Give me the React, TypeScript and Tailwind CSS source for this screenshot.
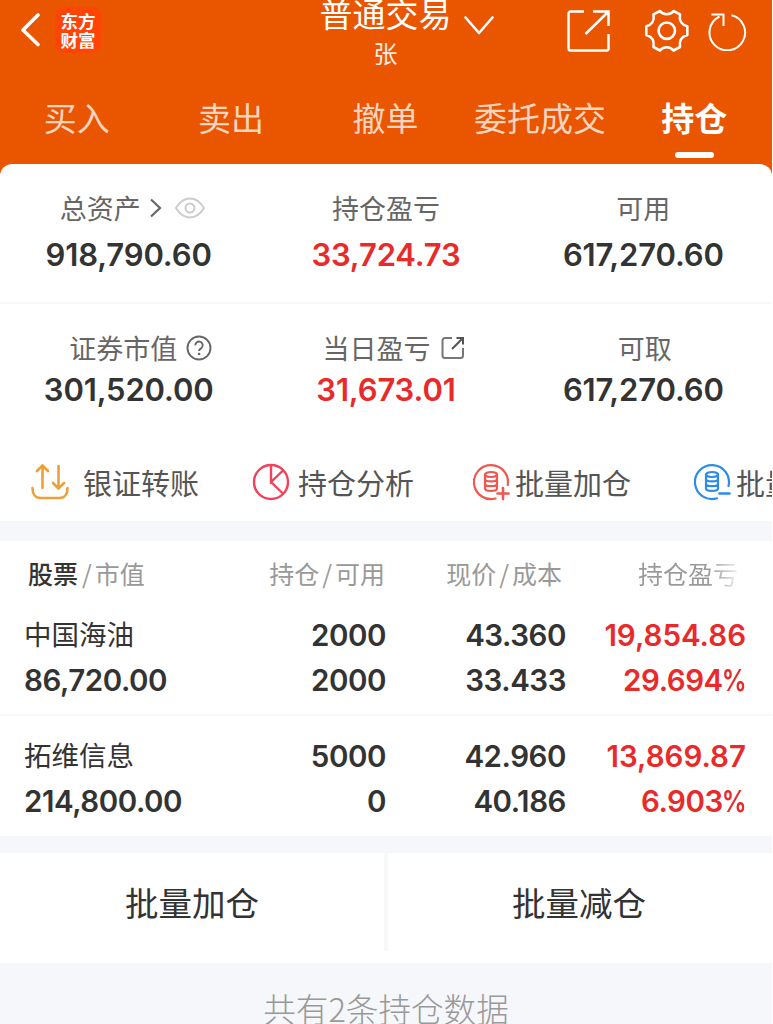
import type { ReactNode } from 'react';
import clsx from 'clsx';

const tabs = ['买入', '卖出', '撤单', '委托成交', '持仓'];

const holdings = [
  {
    name: '中国海油',
    value: '86,720.00',
    amount: '2000',
    available: '2000',
    price: '43.360',
    cost: '33.433',
    profit: '19,854.86',
    rate: '29.694',
  },
  {
    name: '拓维信息',
    value: '214,800.00',
    amount: '5000',
    available: '0',
    price: '42.960',
    cost: '40.186',
    profit: '13,869.87',
    rate: '6.903',
  },
];

const BackIcon = () => (
  <svg width="20" height="34" viewBox="0 0 20 34" fill="none" stroke="#fff" strokeWidth="3.6" strokeLinecap="round" strokeLinejoin="round">
    <path d="M18 2 3 17l15 14.500" />
  </svg>
);

const ChevronIcon = () => (
  <svg width="30" height="19" viewBox="0 0 30 19" fill="none" stroke="#fff" strokeWidth="2.6" strokeLinecap="round" strokeLinejoin="round">
    <path d="M1.500 1.500 15 17 28.500 1.500" />
  </svg>
);

const ShareIcon = () => (
  <svg width="44" height="44" viewBox="0 0 44 44" fill="none" stroke="#fff" strokeWidth="2.500">
    <path d="M18 2.500H4.500a2 2 0 0 0-2 2v35a2 2 0 0 0 2 2h36a2 2 0 0 0 2-2V25" />
    <path d="M27 2.500h15.500V17M42 3 19.500 25" />
  </svg>
);

const GearIcon = () => (
  <svg width="44" height="44" viewBox="0 0 44 44" fill="none" stroke="#fff" strokeWidth="2.600" strokeLinejoin="round">
    <path d="M15 2 C18 6.300 25.500 6.300 28.500 2 L35 5.300 C34 12 36 15.500 42.300 17.300 V26 C36 28 34 31.500 35 38 L28.500 41.500 C25.500 37.200 18 37.200 15 41.500 L8.500 38 C9.500 31.500 7.500 28 1.300 26 V17.300 C7.500 15.500 9.500 12 8.500 5.300 Z" />
    <circle cx="21.800" cy="21.700" r="8.200" />
  </svg>
);

const RefreshIcon = () => (
  <svg width="40" height="40" viewBox="0 0 40 40" fill="none" stroke="#fff" strokeWidth="2">
    <path d="M23.500 4.200A17.800 17.800 0 1 1 11.500 5.500" />
    <path d="M3.500 3.500H15.500V15" />
  </svg>
);

const EyeIcon = () => (
  <svg width="30" height="22" viewBox="0 0 30 22" fill="none" stroke="#ccc" strokeWidth="2">
    <path d="M1 11C5 4.500 9.500 1.500 15 1.500S25 4.500 29 11C25 17.500 20.500 20.500 15 20.500S5 17.500 1 11Z" />
    <circle cx="15" cy="11" r="4.500" />
  </svg>
);

const HelpIcon = () => (
  <svg width="26" height="26" viewBox="0 0 26 26" fill="none" stroke="#666" strokeWidth="1.900">
    <circle cx="13" cy="13" r="11.500" />
    <path d="M9.300 10.400a3.700 3.700 0 1 1 5.700 3c-1.400.9-2 1.300-2 2.600" />
    <path d="M13 17.800v2.300" strokeWidth="2.300" />
  </svg>
);

const OpenIcon = () => (
  <svg width="24" height="24" viewBox="0 0 24 24" fill="none" stroke="#777" strokeWidth="2">
    <path d="M11 2H4a2.500 2.500 0 0 0-2.500 2.500v15A2.500 2.500 0 0 0 4 22h15.500a2.500 2.500 0 0 0 2.500-2.500V12" />
    <path d="M15.500 2H22v6.500M22 2 11 13" stroke="#555" />
  </svg>
);

const TransferIcon = () => (
  <svg width="38" height="38" viewBox="0 0 38 38" fill="none" stroke="#eba038" strokeWidth="2.600" strokeLinecap="round" strokeLinejoin="round">
    <path d="M11.500 25V3M6 8l5.500-5.500L17 8M27.500 3v22M22 20l5.500 5.500L33 20" />
    <path d="M1.500 25c0 6 3 10 8 10h19c5 0 8-4 8-10" />
  </svg>
);

const PieIcon = () => (
  <svg width="38" height="38" viewBox="0 0 38 38" fill="none" stroke="#f2415a" strokeWidth="2.400">
    <circle cx="19" cy="19" r="17" />
    <path d="M19 2v17l12-11.500M19 19l12.500 12" />
  </svg>
);

const BatchIcon = ({ minus }: { minus?: boolean }) => (
  <svg
    width="38"
    height="38"
    viewBox="0 0 38 38"
    fill="none"
    stroke={minus ? '#2b8cea' : '#f0584f'}
    strokeWidth="2.200"
    strokeLinecap="round"
  >
    <path d={minus ? 'M34.500 23A17 17 0 1 0 23 35.300' : 'M34.700 22A17 17 0 1 0 22.500 35.500'} />
    <ellipse cx="18" cy="11.500" rx="6" ry="2.500" />
    <path d="M12 11.500v14c0 3.200 12 3.200 12 0V11.500M12 16c0 3.200 12 3.200 12 0M12 20.800c0 3.200 12 3.200 12 0" />
    {minus ? <path d="M25.500 30.500h10" strokeWidth="2.600" /> : <path d="M24.500 30.500h11M30 25v11" strokeWidth="2.600" />}
  </svg>
);

type StatProps = {
  label: string;
  value: string;
  red?: boolean;
  tight?: boolean;
  labelClass?: string;
  children?: ReactNode;
};

const Stat = ({ label, value, red, tight, labelClass, children }: StatProps) => (
  <div className="flex flex-col items-center">
    <div className={clsx('flex h-9 items-center text-[27px] leading-9 text-[#666]', labelClass)}>
      <span>{label}</span>
      {children}
    </div>
    <p
      className={clsx(
        'font-[Inter] text-[31px] leading-9 font-semibold tracking-[-0.150px] whitespace-nowrap',
        tight ? 'mt-1.5' : 'mt-[11px]',
        red ? 'text-[#e92a2a]' : 'text-[#333]'
      )}
    >
      {value}
    </p>
  </div>
);

const Action = ({ icon, label }: { icon: ReactNode; label: string }) => (
  <div className="flex shrink-0 items-center text-[29px] leading-10 text-[#555]">
    {icon}
    <span className="whitespace-nowrap">{label}</span>
  </div>
);

export default function App() {
  return (
    <div className="h-[1024px] w-[773px] overflow-hidden bg-white font-['Noto_Sans_CJK_SC',sans-serif]">
      <div className="w-[772px]">
        <div className="bg-[#ea5500]">
          <header className="flex h-[84px] items-start text-white">
            <div className="flex w-[320px] items-center pt-[7px] pl-[20px]">
              <BackIcon />
              <div className="ml-[15px] flex h-[46px] w-[46px] flex-col items-center justify-center rounded-[9px] bg-[#ff4405] text-[17.500px] leading-[19.500px] font-bold">
                <span>东方</span>
                <span>财富</span>
              </div>
            </div>
            <div className="flex w-[131px] flex-col items-center">
              <h1 className="-mt-[7px] text-[33px] leading-[40px] font-normal whitespace-nowrap">普通交易</h1>
              <p className="mt-0.5 text-[24px] leading-9 text-white/90">张</p>
            </div>
            <div className="pt-4 pl-[13px]">
              <ChevronIcon />
            </div>
            <div className="flex items-center pt-[9px] pl-[72px]">
              <ShareIcon />
              <div className="ml-[35px]">
                <GearIcon />
              </div>
              <div className="ml-[19px]">
                <RefreshIcon />
              </div>
            </div>
          </header>
          <nav className="grid h-20 grid-cols-5">
            {tabs.map((tab) => {
              const active = tab === '持仓';
              return (
                <div key={tab} className="flex flex-col items-center pt-2">
                  <span
                    className={clsx(
                      '-ml-px text-[33px] leading-[50px] whitespace-nowrap',
                      active ? 'font-bold text-white' : 'font-normal text-white/75'
                    )}
                  >
                    {tab}
                  </span>
                  {active && <i className="mt-2.5 h-1.5 w-[39px] rounded-full bg-white" />}
                </div>
              );
            })}
          </nav>
          <div className="h-3 rounded-t-[14px] bg-white" />
        </div>

        <section className="h-[345px]">
          <div className="grid h-[128px] grid-cols-3 border-b-2 border-[#f8f8f8] pt-[14px]">
            <Stat label="总资产" value="918,790.60" labelClass="pl-[7px]">
              <svg className="ml-2" width="14" height="20" viewBox="0 0 14 20" fill="none" stroke="#666" strokeWidth="2.200">
                <path d="m2 1.500 9 8.500-9 8.500" />
              </svg>
              <span className="ml-3">
                <EyeIcon />
              </span>
            </Stat>
            <Stat label="持仓盈亏" value="33,724.73" red />
            <Stat label="可用" value="617,270.60" />
          </div>
          <div className="grid h-[142px] grid-cols-3 pt-[26px]">
            <Stat label="证券市值" value="301,520.00" tight labelClass="pl-[24px]">
              <span className="ml-[9px]">
                <HelpIcon />
              </span>
            </Stat>
            <Stat label="当日盈亏" value="31,673.01" red tight labelClass="pl-[16px]">
              <span className="ml-[11px]">
                <OpenIcon />
              </span>
            </Stat>
            <Stat label="可取" value="617,270.60" tight labelClass="pl-[3px]" />
          </div>
          <div className="flex overflow-hidden pt-4 pl-[31px]">
            <Action icon={<span className="mr-[14px]"><TransferIcon /></span>} label="银证转账" />
            <Action icon={<span className="mr-2 ml-[53px]"><PieIcon /></span>} label="持仓分析" />
            <Action icon={<span className="mr-1 ml-[59px]"><BatchIcon /></span>} label="批量加仓" />
            <Action icon={<span className="mr-1 ml-[63px]"><BatchIcon minus /></span>} label="批量减仓" />
          </div>
        </section>

        <div className="h-5 bg-[#f5f7fa]" />

        <section>
          <div className="grid h-[72px] grid-cols-[220px_137px_181px_1fr] pt-[14px] pr-[26px] pl-7 text-right text-[25px] leading-9 whitespace-nowrap text-[#999]">
            <p className="text-left">
              <span className="font-medium text-[#333]">股票</span>
              <span className="mr-[3px] ml-1">/</span>市值
            </p>
            <p>
              持仓<span className="mx-[3px]">/</span>可用
            </p>
            <p className="pr-1">
              现价<span className="mx-[3px]">/</span>成本
            </p>
            <p className="pr-2">
              <span className="bg-linear-to-r from-[#999] from-70% to-[#eee] bg-clip-text text-transparent">持仓盈亏</span>
            </p>
          </div>
          {holdings.map((item, i) => (
            <div
              key={item.name}
              className={clsx(
                'grid grid-cols-[180px_182px_180px_1fr] pr-[26px] pl-6 text-right font-[Inter] text-[29.500px] leading-[45px] font-semibold tracking-[-0.450px] whitespace-nowrap text-[#333]',
                i === 0 ? 'h-[103px] border-b-2 border-[#f7f7f7]' : 'h-[120px] pt-[18px]'
              )}
            >
              <div className="text-left">
                <p className="-mt-0.5 mb-0.5 font-['Noto_Sans_CJK_SC',sans-serif] text-[27.500px] font-normal tracking-normal">
                  {item.name}
                </p>
                <p>{item.value}</p>
              </div>
              <div>
                <p>{item.amount}</p>
                <p>{item.available}</p>
              </div>
              <div>
                <p>{item.price}</p>
                <p>{item.cost}</p>
              </div>
              <div className="text-[#e92a2a]">
                <p className="tracking-normal">{item.profit}</p>
                <p>
                  {item.rate}
                  <span className="-ml-[6px] inline-block origin-right scale-x-[0.840]">%</span>
                </p>
              </div>
            </div>
          ))}
        </section>

        <div className="h-[17px] bg-[#f5f7fa]" />

        <div className="flex h-[110px] text-[33.500px] leading-[98px] text-[#333]">
          <button className="h-[98px] w-[388px] border-r-4 border-[#f7f8fa]">批量加仓</button>
          <button className="h-[98px] flex-1 pr-0.5">批量减仓</button>
        </div>

        <footer className="h-[61px] bg-[#f5f7fa] pt-5 text-center text-[32.600px] leading-[50px] font-light text-[#999]">
          共有2条持仓数据
        </footer>
      </div>
    </div>
  );
}
